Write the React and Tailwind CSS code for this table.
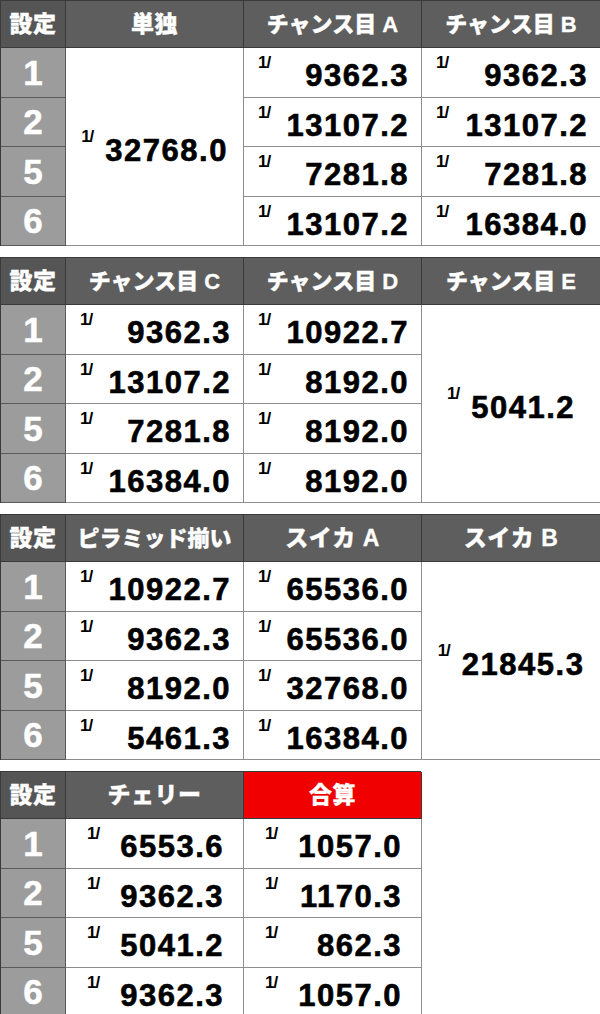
const FONT = { fontFamily: '"Liberation Sans", "Noto Sans CJK JP", Arial, sans-serif' }

const tables = [
  {
    heads: ['単独', 'チャンス目 A', 'チャンス目 B'],
    merged: { col: 0, value: '32768.0' },
    rows: [
      ['9362.3', '9362.3'],
      ['13107.2', '13107.2'],
      ['7281.8', '7281.8'],
      ['13107.2', '16384.0'],
    ],
  },
  {
    heads: ['チャンス目 C', 'チャンス目 D', 'チャンス目 E'],
    merged: { col: 2, value: '5041.2' },
    rows: [
      ['9362.3', '10922.7'],
      ['13107.2', '8192.0'],
      ['7281.8', '8192.0'],
      ['16384.0', '8192.0'],
    ],
  },
  {
    heads: ['ピラミッド揃い', 'スイカ A', 'スイカ B'],
    merged: { col: 2, value: '21845.3' },
    rows: [
      ['10922.7', '65536.0'],
      ['9362.3', '65536.0'],
      ['8192.0', '32768.0'],
      ['5461.3', '16384.0'],
    ],
  },
]

const settings = ['1', '2', '5', '6']

function Head({ children, red, first }) {
  const long = typeof children === 'string' && children.length > 6
  return (
    <div
      className={
        'flex items-center justify-center border-b border-r border-[#3a3a3a] font-black text-white [-webkit-text-stroke:0.3px_white] ' +
        (long ? 'text-[22px] tracking-[0px] ' : 'text-[23px] tracking-[0.5px] ') +
        (red ? 'bg-[#f00000]' : first ? 'bg-[#555555]' : 'bg-[#5e5e5e]')
      }
    >
      {children}
    </div>
  )
}

function Label({ n }) {
  return (
    <div className="flex items-center justify-center border-b border-r border-[#5a5a5a] bg-[#9c9c9c] text-[35px] font-bold leading-none text-white [-webkit-text-stroke:0.5px_white]">
      {n}
    </div>
  )
}

function Cell({ value, wide }) {
  return (
    <div
      className={
        'flex items-start justify-between border-b border-r border-[#8e8e8e] bg-white ' +
        (wide ? 'pl-[21px] pr-[19px]' : 'pl-[14px] pr-[12px]')
      }
    >
      <span className="mt-[6px] text-[17px] font-bold leading-none tracking-[-1px]">1/</span>
      <span className="mt-[12px] text-[31px] font-bold leading-none tracking-[1.5px] [-webkit-text-stroke:0.6px_black]">{value}</span>
    </div>
  )
}

function Merged({ value, col }) {
  const pos = col === 0 ? 'col-start-2' : 'col-start-4'
  return (
    <div className={'row-span-4 row-start-2 flex items-center justify-center border-b border-r border-[#8e8e8e] bg-white ' + pos}>
      <div className="flex items-start gap-[12px]">
        <span className="text-[17px] font-bold leading-none tracking-[-1px]">1/</span>
        <span className="mt-[7px] text-[31px] font-bold leading-none tracking-[1.5px] [-webkit-text-stroke:0.6px_black]">{value}</span>
      </div>
    </div>
  )
}

function Table({ t }) {
  const valueCols = t.merged.col === 0 ? [3, 4] : [2, 3]
  return (
    <div className="grid w-[600px] grid-cols-[65px_178px_178px_179px] grid-rows-[47px_repeat(4,49.5px)] border-l border-t border-[#3a3a3a]">
      <Head first>設定</Head>
      {t.heads.map((h) => (
        <Head key={h}>{h}</Head>
      ))}
      {settings.map((s, i) => (
        <div key={s} className="contents">
          <div className="col-start-1 grid" style={{ gridRowStart: i + 2 }}>
            <Label n={s} />
          </div>
          {t.rows[i].map((v, j) => (
            <div key={j} className="grid" style={{ gridRowStart: i + 2, gridColumnStart: valueCols[j] }}>
              <Cell value={v} />
            </div>
          ))}
        </div>
      ))}
      <Merged value={t.merged.value} col={t.merged.col} />
    </div>
  )
}

const last = [
  ['6553.6', '1057.0'],
  ['9362.3', '1170.3'],
  ['5041.2', '862.3'],
  ['9362.3', '1057.0'],
]

export default function App() {
  return (
    <div className="flex h-[1014px] w-[600px] flex-col gap-[11px] bg-white" style={FONT}>
      {tables.map((t, i) => (
        <Table key={i} t={t} />
      ))}
      <div className="grid w-[421px] grid-cols-[65px_178px_178px] grid-rows-[47px_repeat(4,49.5px)] border-l border-t border-[#3a3a3a]">
        <Head first>設定</Head>
        <Head>チェリー</Head>
        <Head red>合算</Head>
        {settings.map((s, i) => (
          <div key={s} className="contents">
            <Label n={s} />
            <Cell value={last[i][0]} wide />
            <Cell value={last[i][1]} wide />
          </div>
        ))}
      </div>
    </div>
  )
}
